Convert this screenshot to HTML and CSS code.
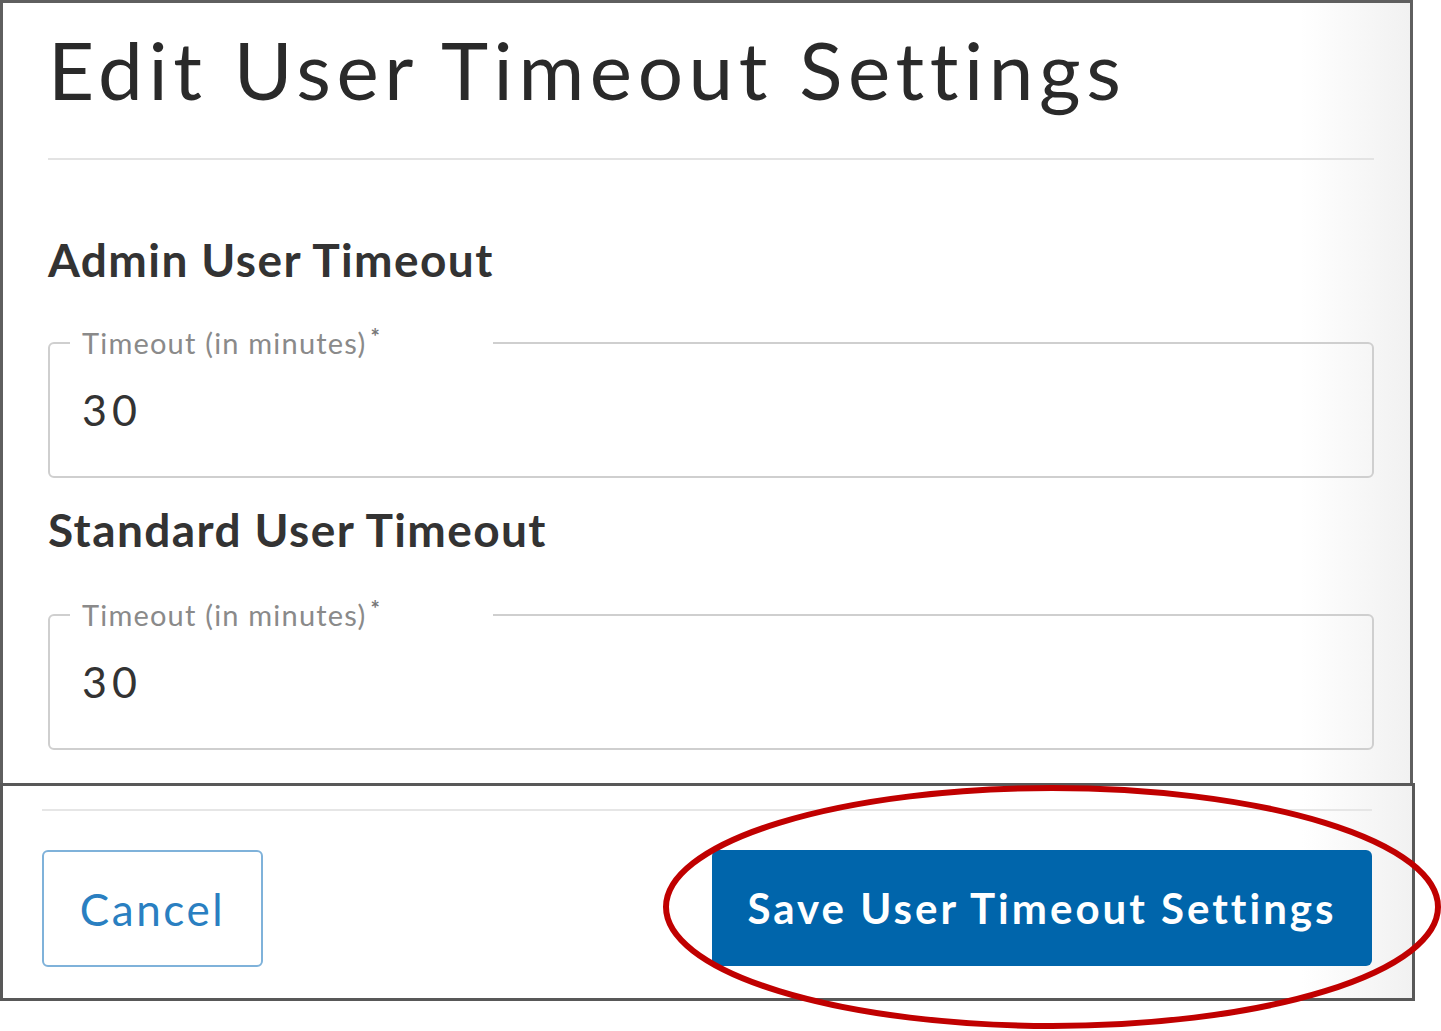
FILE: index.html
```html
<!DOCTYPE html>
<html lang="en">
<head>
<meta charset="utf-8">
<title>Edit User Timeout Settings</title>
<link rel="stylesheet" href="styles.css">
</head>
<body>
<div class="canvas">
  <section class="panel panel-main">
    <h1 class="title">Edit User Timeout Settings</h1>
    <hr class="divider">
    <h2 class="section-title">Admin User Timeout</h2>
    <fieldset class="field field-admin">
      <legend class="field-label">Timeout (in minutes)<span class="req">*</span></legend>
      <input class="field-input" type="text" value="30">
    </fieldset>
    <h2 class="section-title section-standard">Standard User Timeout</h2>
    <fieldset class="field field-standard">
      <legend class="field-label">Timeout (in minutes)<span class="req">*</span></legend>
      <input class="field-input" type="text" value="30">
    </fieldset>
  </section>
  <section class="panel panel-footer">
    <hr class="divider footer-divider">
    <div class="actions">
      <button class="btn btn-outline" type="button">Cancel</button>
      <button class="btn btn-primary" type="button">Save User Timeout Settings</button>
    </div>
  </section>
  <svg class="annotation" width="1441" height="1031" viewBox="0 0 1441 1031">
    <ellipse cx="1052" cy="907" rx="386" ry="119" fill="none" stroke="#c00000" stroke-width="6"/>
  </svg>
</div>
</body>
</html>
```
FILE: styles.css
```css
html, body {
  margin: 0;
  padding: 0;
  background: #ffffff;
}

body {
  font-family: Lato, "Liberation Sans", sans-serif;
}

.canvas {
  position: relative;
  width: 1441px;
  height: 1031px;
  overflow: hidden;
}

.panel {
  box-sizing: border-box;
  background: linear-gradient(to right, #ffffff calc(100% - 110px), #f1f1f1);
}

.panel-main {
  width: 1413px;
  height: 783px;
  border: 3px solid #5f5f5f;
  border-bottom: 0;
  padding: 26px 36px 0 45px;
}

.title {
  margin: 0;
  font-weight: 400;
  font-size: 80px;
  line-height: 80px;
  letter-spacing: 5.6px;
  color: #2a2a2a;
}

.divider {
  margin: 49px 0 0;
  border: 0;
  height: 2px;
  background: #e3e3e3;
}

.section-title {
  margin: 77px 0 0;
  font-weight: 700;
  font-size: 46px;
  line-height: 46px;
  letter-spacing: 1.4px;
  color: #333333;
}

.section-standard {
  margin-top: 29px;
}

.field {
  margin: 46px 0 0;
  padding: 0 0 45px 20px;
  border: 2px solid #cfcfcf;
  border-radius: 6px;
  min-width: 0;
}

.field-standard {
  margin-top: 48px;
}

.field-label {
  box-sizing: border-box;
  width: 423px;
  padding: 0 0 0 12px;
  font-weight: 400;
  font-size: 29px;
  line-height: 28px;
  letter-spacing: 1.2px;
  color: #8a8a8a;
}

.req {
  display: inline-block;
  margin-left: 4px;
  font-weight: 700;
  font-size: 22px;
  line-height: 16px;
  vertical-align: top;
  color: #777777;
}

.field-input {
  display: block;
  box-sizing: border-box;
  width: 100%;
  height: 43px;
  margin: 31px 0 0;
  padding: 0 0 0 12px;
  border: 0;
  outline: none;
  background: transparent;
  font-family: Lato, "Liberation Sans", sans-serif;
  font-weight: 400;
  font-size: 43px;
  line-height: 43px;
  letter-spacing: 5px;
  color: #333333;
}

.panel-footer {
  width: 1415px;
  height: 218px;
  border: 3px solid #585858;
  padding: 23px 40px 0 39px;
}

.footer-divider {
  margin: 0;
  background: #e6e6e6;
}

.actions {
  display: flex;
  justify-content: space-between;
  align-items: flex-start;
  margin-top: 39px;
}

.btn {
  box-sizing: border-box;
  border-radius: 6px;
  font-family: Lato, "Liberation Sans", sans-serif;
  cursor: pointer;
  padding: 0;
}

.btn-outline {
  width: 221px;
  height: 117px;
  border: 2px solid #7fb2da;
  background: #ffffff;
  color: #2a7fc1;
  font-weight: 400;
  font-size: 44px;
  letter-spacing: 2.6px;
}

.btn-primary {
  width: 660px;
  height: 116px;
  border: 0;
  background: #0065ab;
  color: #ffffff;
  font-weight: 700;
  font-size: 42px;
  letter-spacing: 3px;
}

.annotation {
  position: absolute;
  left: 0;
  top: 0;
  pointer-events: none;
}
```
